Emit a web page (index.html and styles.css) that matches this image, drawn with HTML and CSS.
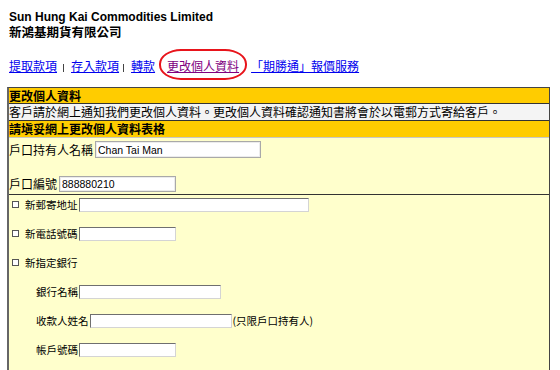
FILE: index.html
```html
<!DOCTYPE html>
<html>
<head>
    <title>更改個人資料 | Sun Hung Kai Commodities</title>
    <meta charset="utf-8">
    <link rel="stylesheet" href="styles.css">
</head>
<body>

    <div class="company">
        <div>Sun Hung Kai Commodities Limited</div>
        <div class="company-zh">新鴻基期貨有限公司</div>
    </div>

    <div class="nav">
        <a href="#">提取款項</a><span class="sep sep-wide"></span><a href="#">存入款項</a><span class="sep"></span><a href="#">轉款</a><span class="current"><a href="#" class="visited">更改個人資料</a></span><a href="#">「期勝通」報價服務</a>
    </div>

    <div class="panel">
        <div class="bar bar-first">更改個人資料</div>
        <div class="note">客戶請於網上通知我們更改個人資料。更改個人資料確認通知書將會於以電郵方式寄給客戶。</div>
        <div class="bar bar-last">請塡妥網上更改個人資料表格</div>

        <div class="block block-account">
            <div class="row row-name">
                <label for="holder">戶口持有人名稱</label>
                <input type="text" id="holder" class="field-holder" value="Chan Tai Man">
            </div>
            <div class="row row-no">
                <label for="accno">戶口編號</label>
                <input type="text" id="accno" class="field-accno" value="888880210">
            </div>
        </div>

        <div class="block block-changes">
            <div class="row">
                <span class="check"></span>
                <label for="addr">新郵寄地址</label>
                <input type="text" id="addr" class="field w-addr">
            </div>
            <div class="row">
                <span class="check"></span>
                <label for="phone">新電話號碼</label>
                <input type="text" id="phone" class="field w-short">
            </div>
            <div class="row">
                <span class="check"></span>
                <label>新指定銀行</label>
            </div>
            <div class="row indent">
                <label for="bank">銀行名稱</label>
                <input type="text" id="bank" class="field w-mid">
            </div>
            <div class="row indent">
                <label for="payee">收款人姓名</label>
                <input type="text" id="payee" class="field w-mid">
                <span class="hint">(只限戶口持有人)</span>
            </div>
            <div class="row indent">
                <label for="bankacc">帳戶號碼</label>
                <input type="text" id="bankacc" class="field w-short">
            </div>
        </div>
    </div>

</body>
</html>
```

FILE: styles.css
```css
body {
    margin: 0;
    background-color: #fff;
    color: #000;
    font-family: "Liberation Sans", "Noto Sans CJK TC", sans-serif;
}

.company {
    padding: 9px 0 0 9px;
    font-size: 12px;
    font-weight: bold;
    line-height: 16px;
}

.company-zh {
    font-size: 12.5px;
}

.nav {
    margin-top: 17px;
    padding-left: 9px;
    font-family: "Noto Sans CJK TC", sans-serif;
    font-size: 12px;
    line-height: 16px;
    height: 16px;
}

.nav a {
    color: #0000ee;
    text-decoration: underline;
}

.nav a.visited {
    color: #800080;
}

.sep {
    display: inline-block;
    width: 1px;
    height: 8px;
    background-color: #444;
    margin: 0 7px 0 4px;
    vertical-align: -1px;
}

.sep-wide {
    margin-left: 6px;
}

.current {
    position: relative;
    margin: 0 12px;
}

.current::after {
    content: "";
    position: absolute;
    top: -8px;
    bottom: -6px;
    left: -8px;
    right: -8px;
    border: 2px solid #e8141b;
    border-radius: 22px / 15px;
}

.panel {
    margin: 13px 0 0 7px;
    width: 543px;
    box-sizing: border-box;
    border: 1px solid #444;
    border-left: 2px solid #666;
    font-family: "Noto Sans CJK TC", sans-serif;
    font-size: 12px;
    background-color: #ffffcc;
}

.bar {
    background-color: #ffcc00;
    font-weight: bold;
    height: 16px;
    line-height: 16px;
    border-bottom: 1px solid #333;
}

.bar-first {
    height: 15px;
    line-height: 15px;
}

.bar-last {
    border-bottom-color: #c8c8c8;
}

.note {
    background-color: #f4f4f4;
    height: 16px;
    line-height: 16px;
    border-bottom: 1px solid #333;
}

.block {
    display: flex;
    flex-direction: column;
}

.row {
    display: flex;
    align-items: center;
    white-space: nowrap;
}

.block-account {
    padding: 3px 0 2px 0;
    gap: 18px;
    border-bottom: 1px solid #333;
}

.row-name {
    height: 17px;
}

.row-no {
    height: 16px;
}

.block-account label {
    margin-right: 2px;
    line-height: 16px;
}

.block-account input {
    box-sizing: border-box;
    border: 1px solid #a9a9a9;
    box-shadow: inset 0 0 0 1px #ececec;
    background-color: #fff;
    font-family: "Liberation Sans", sans-serif;
    font-size: 10.5px;
    padding: 0 2px;
    margin: 0;
}

.field-holder {
    width: 166px;
    height: 17px;
}

.field-accno {
    width: 117px;
    height: 16px;
}

.block-changes {
    padding: 2px 0 20px 0;
    gap: 14px;
    font-size: 10.5px;
}

.block-changes .row {
    height: 15px;
}

.check {
    display: inline-block;
    width: 7px;
    height: 7px;
    box-sizing: border-box;
    border: 1px solid #555;
    background-color: #fff;
    margin: 0 6px 0 3px;
}

.indent {
    padding-left: 27px;
}

.block-changes label {
    margin-right: 1px;
    line-height: 15px;
}

.field {
    box-sizing: border-box;
    height: 14px;
    margin: 0;
    padding: 0 2px;
    background-color: #fff;
    border: 1px solid;
    border-color: #6f6f6f #d4d4d4 #d4d4d4 #6f6f6f;
}

.w-addr {
    width: 230px;
}

.w-short {
    width: 97px;
}

.w-mid {
    width: 142px;
}

.hint {
    margin-left: 1px;
}
```
